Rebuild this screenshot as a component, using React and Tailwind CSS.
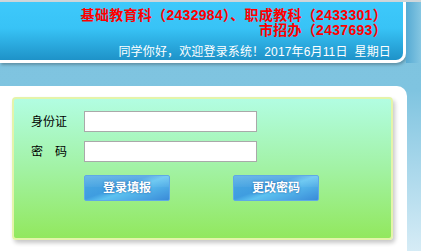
import React from 'react';

const font = { fontFamily: '"Liberation Sans", "Noto Sans CJK SC", sans-serif' };

const BlueButton = ({ children }) => (
  <button
    className="relative w-[86px] h-[26px] rounded-[2px] border border-[#5fa9e6] overflow-hidden text-white text-[12px] font-bold leading-none bg-[linear-gradient(160deg,#4aa9e3_0%,#3f9de0_42%,#5cc2f0_55%,#3a8bd8_100%)] [text-shadow:0_0_2px_#1a5aa0]"
  >
    <span className="absolute inset-x-0 top-0 h-[11px] bg-[linear-gradient(to_bottom,rgba(255,255,255,0.18),rgba(255,255,255,0.04))]" />
    <span className="relative">{children}</span>
  </button>
);

const App = () => {
  return (
    <div
      style={font}
      className="w-full h-[251px] overflow-hidden bg-[linear-gradient(to_bottom,#7ec3df_0%,#7fc4e0_36%,#d6ecf6_100%)]"
    >
      <div className="h-[2px] bg-[#cfd6da]" />
      <div className="flex">
        <div className="w-[406px] h-[61px] border-r-[3px] border-b-[3px] border-white rounded-br-[10px] bg-[linear-gradient(to_bottom,#3ec9fb_0%,#38c3f6_45%,#1e92c8_100%)] shadow-[1px_2px_3px_rgba(0,0,0,0.25)] pt-[6px]">
          <div className="pr-[16px] text-right text-[14px] font-bold leading-[15px] tracking-[0.3px] text-[#ff0000]">
            <div>基础教育科（2432984）、职成教科（2433301）</div>
            <div>市招办（2437693）</div>
          </div>
          <div className="mt-[7px] pr-[12px] text-right text-[12px] leading-[14px] tracking-[0.15px] text-white">
            同学你好，欢迎登录系统！2017年6月11日&nbsp;&nbsp;星期日
          </div>
        </div>
        <div className="flex-1 h-[61px] bg-[linear-gradient(to_right,#56aad3,#84c6e2)]" />
      </div>

      <div className="mt-[23px] w-[407px] h-[170px] bg-white rounded-tr-[10px] pt-[11px] pl-[12px]">
        <div className="w-[381px] h-[143px] rounded-[4px] border-2 border-[#e4f4aa] bg-[linear-gradient(to_bottom,#b2fde2_0%,#a2f2a4_50%,#92e85e_100%)] shadow-[2px_3px_4px_rgba(0,0,0,0.22)] pl-[17px] pt-[12px]">
          <div className="flex items-center h-[21px]">
            <div className="w-[53px] text-[12px] text-black">身份证</div>
            <input className="w-[173px] h-[21px] bg-white border border-[#a9a9a9] outline-none" />
          </div>
          <div className="flex items-center h-[21px] mt-[9px]">
            <div className="w-[53px]">
              <div className="w-[36px] flex justify-between text-[12px] text-black">
                <span>密</span>
                <span>码</span>
              </div>
            </div>
            <input type="password" className="w-[173px] h-[21px] bg-white border border-[#a9a9a9] outline-none" />
          </div>
          <div className="flex gap-[63px] mt-[13px] ml-[53px]">
            <BlueButton>登录填报</BlueButton>
            <BlueButton>更改密码</BlueButton>
          </div>
        </div>
      </div>
    </div>
  );
};

export default App;
